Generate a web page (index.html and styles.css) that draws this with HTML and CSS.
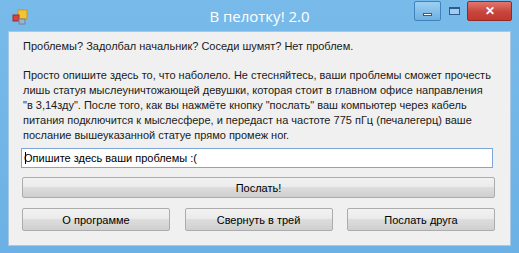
FILE: index.html
```html
<!DOCTYPE html>
<html lang="ru">
<head>
    <meta charset="UTF-8">
    <title>В пелотку! 2.0</title>
    <link rel="stylesheet" href="styles.css">
</head>
<body>
    <div class="window">
        <div class="titlebar">
            <svg class="app-icon" width="16" height="16" viewBox="0 0 16 16">
                <rect x="6" y="1" width="9" height="9" fill="#f2c531" stroke="#c9962a" stroke-width="1"/>
                <rect x="1" y="6" width="6" height="6" fill="#d8443c" stroke="#9e2b2b" stroke-width="1"/>
                <rect x="7" y="10" width="6" height="5" fill="#9fb2cc" stroke="#6f84a3" stroke-width="1"/>
            </svg>
            <div class="title">В пелотку! 2.0</div>
            <div class="wincontrols">
                <div class="wbtn minimize"><span class="dash"></span></div>
                <div class="wbtn maximize"><span class="box"></span></div>
                <div class="wbtn close">✕</div>
            </div>
        </div>

        <div class="client">
            <p class="lead">Проблемы? Задолбал начальник? Соседи шумят? Нет проблем.</p>
            <p class="desc">Просто опишите здесь то, что наболело. Не стесняйтесь, ваши проблемы сможет прочесть<br>лишь статуя мыслеуничтожающей девушки, которая стоит в главном офисе направления<br>"в 3,14зду". После того, как вы нажмёте кнопку "послать" ваш компьютер через кабель<br>питания подключится к мыслесфере, и передаст на частоте 775 пГц (печалегерц) ваше<br>послание вышеуказанной статуе прямо промеж ног.</p>

            <label class="field">
                <input class="problem" type="text" value="Опишите здесь ваши проблемы :(">
            </label>

            <button class="btn send">Послать!</button>

            <div class="actions">
                <button class="btn">О программе</button>
                <button class="btn">Свернуть в трей</button>
                <button class="btn">Послать друга</button>
            </div>
        </div>
    </div>
</body>
</html>
```

FILE: styles.css
```css
*{margin:0;padding:0;box-sizing:border-box}
body{width:519px;height:253px;overflow:hidden;background:#6fb3e6;font-family:"Liberation Sans",Arial,sans-serif}
.window{width:519px;height:253px;display:flex;flex-direction:column;background:linear-gradient(#78bbea,#6cb1e5);padding:0 8px 7px 8px}
.titlebar{height:31px;display:flex;align-items:flex-start;position:relative}
.app-icon{margin:9px 0 0 4px}
.title{position:absolute;left:0;right:0;top:6px;text-align:center;color:#fff;font-family:"Open Sans","Liberation Sans",sans-serif;font-size:15px;line-height:20px;pointer-events:none}
.wincontrols{margin-left:auto;display:flex;height:20px;margin-top:1px;margin-right:-1px}
.wbtn{height:20px;display:flex;align-items:center;justify-content:center}
.minimize{width:27px;border:1px solid #3f83bd;background:linear-gradient(#9cd0f3,#6fb0e2);border-radius:2px}
.minimize .dash{width:9px;height:3px;background:#fff;border:1px solid #2d5d8e;margin-top:6px}
.maximize{width:26px}
.maximize .box{width:11px;height:8px;border:1px solid #2d5d8e;border-top-width:2px;background:#9fcdf0}
.close{width:45px;background:linear-gradient(#e4756c,#c7463c 55%,#c2382e);border:1px solid #8f2a24;border-radius:2px;color:#fff;font-size:12px;font-weight:bold}
.client{flex:1;background:#f0f0f0;padding:7px 17px 0 12px;color:#1a1a1a;font-size:11px;line-height:15px;border:1px solid #a7c9e6}
.lead{padding-left:2px}
.desc{padding-left:2px;margin-top:14px;white-space:nowrap}
.field{display:block;margin-top:5px;position:relative}
.field::before{content:"";position:absolute;left:4px;top:4px;width:1px;height:12px;background:#000}
.problem{display:block;width:100%;height:20px;border:1px solid #7ea6d6;background:#fff;font:11px "Liberation Sans",Arial,sans-serif;padding:0 2px;color:#000;outline:none}
.btn{height:21px;border:1px solid #acacac;border-radius:2px;background:linear-gradient(#f2f2f2 0%,#ebebeb 45%,#dddddd 50%,#cfcfcf 100%);font:11px "Liberation Sans",Arial,sans-serif;color:#000}
.send{display:block;width:473px;margin:9px 0 0 1px}
.actions{display:grid;grid-template-columns:repeat(3,148px);justify-content:space-between;width:473px;margin:10px 0 0 1px}
.actions .btn{height:23px}
```
